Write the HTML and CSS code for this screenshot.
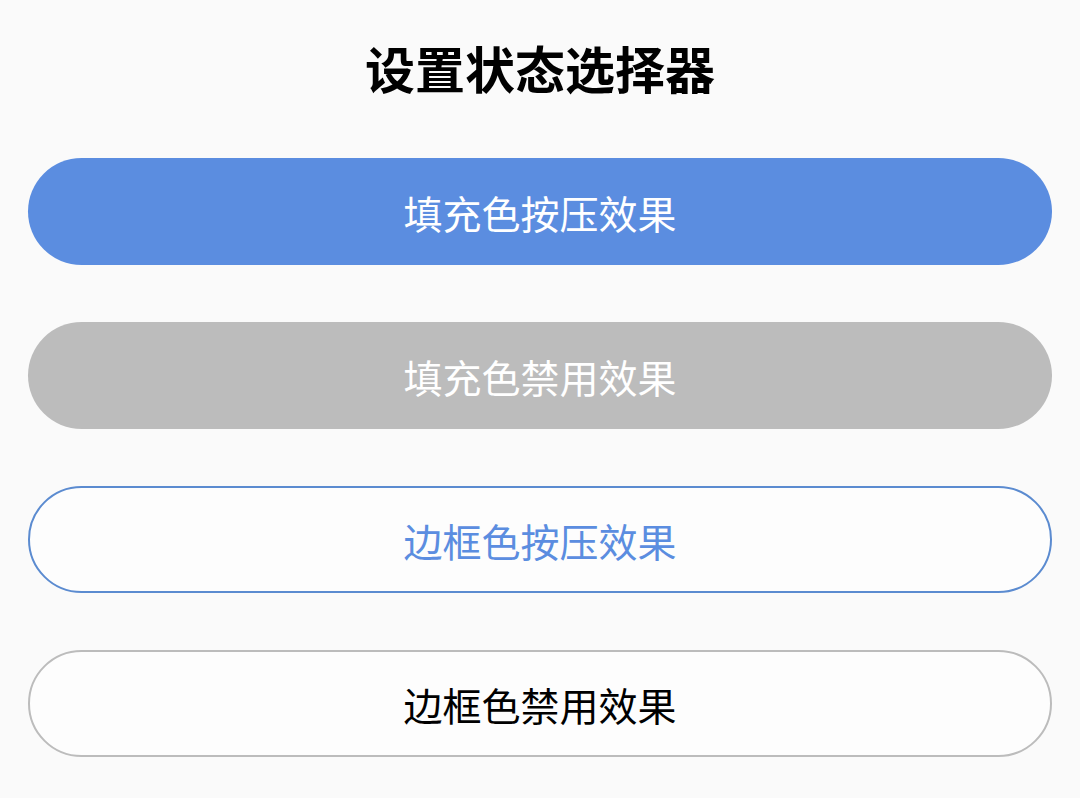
FILE: index.html
```html
<!DOCTYPE html>
<html lang="zh">
<head>
<meta charset="utf-8">
<link rel="stylesheet" href="styles.css">
</head>
<body>
<div class="page">
  <h1 class="title">设置状态选择器</h1>
  <div class="list">
    <div class="btn btn-fill-blue">填充色按压效果</div>
    <div class="btn btn-fill-gray">填充色禁用效果</div>
    <div class="btn btn-line-blue">边框色按压效果</div>
    <div class="btn btn-line-gray">边框色禁用效果</div>
  </div>
</div>
</body>
</html>
```

FILE: styles.css
```css
html, body {
  margin: 0;
  padding: 0;
  background: #fafafa;
}
.page {
  width: 1080px;
  height: 798px;
  font-family: "Noto Sans CJK SC", "Noto Sans", sans-serif;
  display: flex;
  flex-direction: column;
  align-items: center;
}
.title {
  margin: 0;
  margin-top: 32px;
  height: 70px;
  line-height: 70px;
  font-size: 50px;
  font-weight: 700;
  color: #000;
}
.list {
  margin-top: 56px;
  width: 1024px;
  display: flex;
  flex-direction: column;
  gap: 57px;
}
.btn {
  box-sizing: border-box;
  height: 107px;
  border-radius: 54px;
  display: flex;
  align-items: center;
  justify-content: center;
  font-size: 39px;
  letter-spacing: 0;
}
.btn-fill-blue {
  background: #5b8de0;
  color: #fff;
}
.btn-fill-gray {
  background: #bcbcbc;
  color: #fff;
}
.btn-line-blue {
  border: 2.5px solid #5b8bd0;
  color: #5b8de0;
  background: #fdfdfd;
}
.btn-line-gray {
  border: 2.5px solid #bcbcbc;
  color: #000;
  background: #fdfdfd;
}
```
